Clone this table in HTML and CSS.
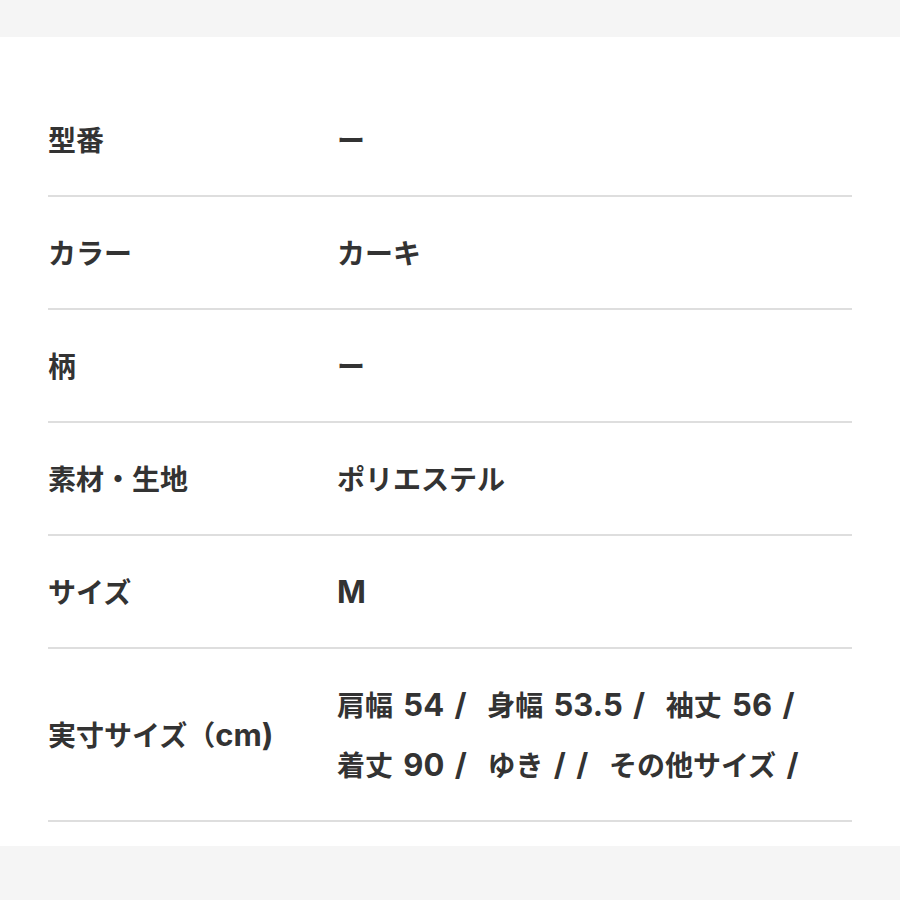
FILE: index.html
```html
<!DOCTYPE html>
<html lang="ja">
<head>
<meta charset="utf-8">
<title>商品情報</title>
<link rel="stylesheet" href="styles.css">
</head>
<body>
<div class="top-band"></div>
<main class="panel">
  <dl class="spec">
    <div class="row"><dt class="label">型番</dt><dd class="value">ー</dd></div>
    <div class="row"><dt class="label">カラー</dt><dd class="value">カーキ</dd></div>
    <div class="row"><dt class="label">柄</dt><dd class="value">ー</dd></div>
    <div class="row"><dt class="label">素材・生地</dt><dd class="value">ポリエステル</dd></div>
    <div class="row"><dt class="label">サイズ</dt><dd class="value"><span class="lat">M</span></dd></div>
    <div class="row"><dt class="label">実寸サイズ（<span class="lat">cm)</span></dt><dd class="value"><span class="line">肩幅<span class="lat"> 54 /  </span>身幅<span class="lat"> 53.5 /  </span>袖丈<span class="lat"> 56 /</span></span><span class="line">着丈<span class="lat"> 90 /  </span>ゆき<span class="lat"> / /  </span>その他サイズ<span class="lat"> /</span></span></dd></div>
  </dl>
</main>
<div class="bottom-band"></div>
</body>
</html>
```
FILE: styles.css
```css
html, body {
  margin: 0;
  padding: 0;
  background: #f5f5f5;
}
body {
  font-family: "Noto Sans CJK JP", "Noto Sans", sans-serif;
  color: #333;
  width: 900px;
  height: 900px;
  overflow: hidden;
}
.top-band {
  height: 37px;
}
.panel {
  background: #fff;
  padding: 47px 48px 24px;
}
.spec {
  margin: 0;
}
.row {
  display: flex;
  align-items: center;
  padding: 25px 0 26px;
  border-bottom: 2px solid #dedede;
}
.label {
  width: 289px;
  flex: none;
  margin: 0;
  font-size: 28px;
  font-weight: 700;
  line-height: 60px;
}
.value {
  margin: 0;
  font-size: 28px;
  font-weight: 700;
  line-height: 60px;
  white-space: pre;
}
.lat {
  font-family: Inter, "Liberation Sans", sans-serif;
  font-size: 31px;
  font-weight: 700;
  line-height: 1;
  word-spacing: 3px;
}
.line {
  display: block;
}
```
